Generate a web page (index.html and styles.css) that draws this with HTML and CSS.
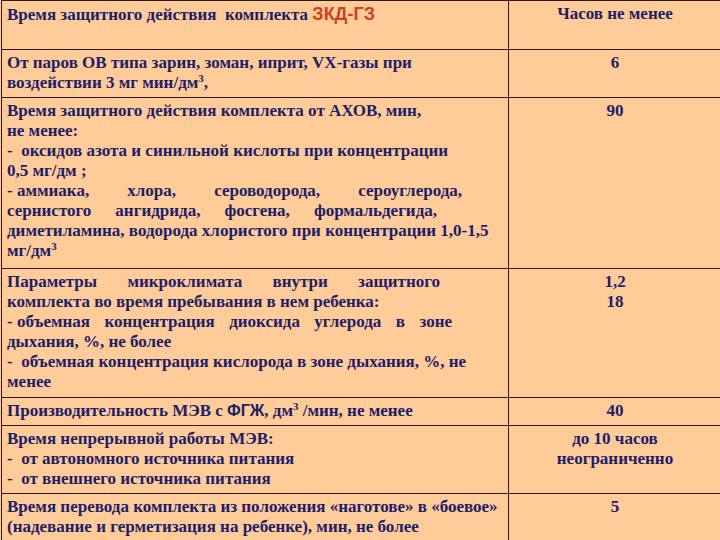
FILE: index.html
```html
<!DOCTYPE html>
<html lang="ru">
<head>
<meta charset="utf-8">
<title>ЗКД-ГЗ</title>
<link rel="stylesheet" href="styles.css">
</head>
<body>
<div class="tbl">
  <div class="cell">Время защитного действия&nbsp; комплекта <span class="brand">ЗКД-ГЗ</span></div>
  <div class="cell val">Часов не менее</div>

  <div class="cell">От паров <span class="em">ОВ</span> типа зарин, зоман, иприт, <span class="em">VX</span>-газы при<br>воздействии 3 мг мин/дм<sup>3</sup>,</div>
  <div class="cell val">6</div>

  <div class="cell">
    <div>Время защитного действия комплекта от АХОВ, мин,</div>
    <div>не менее:</div>
    <div>-&nbsp; оксидов азота и синильной кислоты при концентрации</div>
    <div>0,5 мг/дм ;</div>
    <div class="j w460"><span class="nw">- аммиака,</span> хлора, сероводорода, сероуглерода,</div>
    <div class="j w435">сернистого ангидрида, фосгена, формальдегида,</div>
    <div>диметиламина, водорода хлористого при концентрации 1,0-1,5</div>
    <div>мг/дм<sup>3</sup></div>
  </div>
  <div class="cell val">90</div>

  <div class="cell">
    <div class="j w438">Параметры микроклимата внутри защитного</div>
    <div>комплекта во время пребывания в нем ребенка:</div>
    <div class="j w450"><span class="nw">- объемная</span> концентрация диоксида углерода в зоне</div>
    <div>дыхания, %, не более</div>
    <div>-&nbsp; объемная концентрация кислорода в зоне дыхания, %, не</div>
    <div>менее</div>
  </div>
  <div class="cell val">1,2<br>18</div>

  <div class="cell">Производительность МЭВ с <span class="sans">ФГЖ</span>, дм<sup>3</sup> /мин, не менее</div>
  <div class="cell val">40</div>

  <div class="cell">Время непрерывной работы МЭВ:<br>-&nbsp; от автономного источника питания<br>-&nbsp; от внешнего источника питания</div>
  <div class="cell val">до 10 часов<br>неограниченно</div>

  <div class="cell">Время перевода комплекта из положения «наготове» в «боевое»<br>(надевание и герметизация на ребенке), мин, не более</div>
  <div class="cell val">5</div>
</div>
</body>
</html>
```
FILE: styles.css
```css
html, body {
  margin: 0;
  padding: 0;
  background: #ffcb98;
  overflow: hidden;
}

.tbl {
  display: grid;
  grid-template-columns: 506px 1fr;
  grid-template-rows: 48px 47px 170px 128px 27px 67px 50px;
  gap: 1px;
  margin-left: 1px;
  padding: 1px 0 0 1px;
  width: 718px;
  background: #2b1a12;
  font-family: "Liberation Serif", "Times New Roman", serif;
  font-weight: bold;
  font-size: 17px;
  line-height: 20px;
  color: #1c2068;
}

.cell {
  background: #ffcb98;
  padding: 3px 4px 4px 5px;
  white-space: nowrap;
  overflow: hidden;
}

.val {
  text-align: center;
}

.brand {
  font-family: "Liberation Sans", Arial, sans-serif;
  font-size: 18px;
  color: #c8441c;
}

.sans {
  font-family: "Liberation Sans", Arial, sans-serif;
  font-size: 16px;
}

sup {
  font-size: 11px;
  line-height: 0;
  vertical-align: 6px;
}

.j {
  text-align: justify;
  text-align-last: justify;
  white-space: normal;
}

.nw {
  display: inline-block;
  white-space: nowrap;
}

.w460 { width: 455px; }
.w435 { width: 430px; }
.w438 { width: 433px; }
.w450 { width: 445px; }
```
